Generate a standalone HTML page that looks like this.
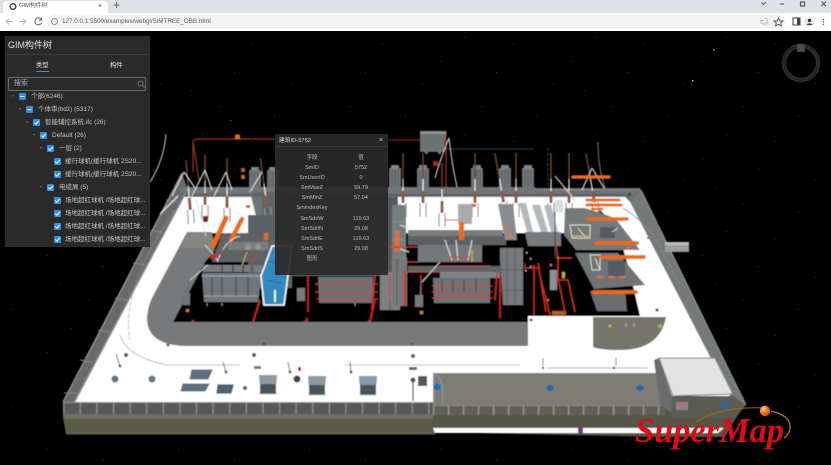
<!DOCTYPE html>
<html lang="zh"><head><meta charset="utf-8"><title>GIM构件树</title>
<style>
html,body{margin:0;padding:0;background:#000;width:831px;height:465px;overflow:hidden;font-family:"Liberation Sans","Noto Sans CJK SC",sans-serif}
#scene{position:absolute;left:0;top:31px}
.abs{position:absolute;white-space:nowrap}
#tabs{position:absolute;left:0;top:0;width:831px;height:13px;background:#dee1e6}
#tab{position:absolute;left:3px;top:1px;width:105px;height:12px;background:#fff;border-radius:4px 4px 0 0}
#bar{position:absolute;left:0;top:13px;width:831px;height:18px;background:#fff}
#url{position:absolute;left:47px;top:15px;width:738px;height:14px;background:#f1f3f4;border-radius:7px}
#panel{position:absolute;left:5px;top:36px;width:145px;height:211px;background:rgba(43,43,43,.97)}
#panel .abs{filter:blur(.3px)}
.row{position:absolute;height:13px;font-size:6.5px;line-height:13px;color:#c4c4c4;white-space:nowrap;filter:blur(.3px)}
.cb{position:absolute;width:7px;height:7px;background:#2f8fe6;border-radius:1px;top:3px}
.cb svg{position:absolute;left:0;top:0}
.ar{position:absolute;top:5px;width:0;height:0;border-left:1.5px solid transparent;border-right:1.500px solid transparent;border-top:2.500px solid #777}
#pop{position:absolute;left:275px;top:134px;width:113px;height:141px;background:rgba(42,42,42,.93)}
#pop div{position:absolute;font-size:5.500px;line-height:8px;color:#bdbdbd;white-space:nowrap;transform:translateX(-50%);filter:blur(.35px)}
</style></head><body>

<svg id="scene" width="831" height="434" viewBox="0 31 831 434" xmlns="http://www.w3.org/2000/svg">
<defs>
<pattern id="stars" width="131" height="97" patternUnits="userSpaceOnUse">
<rect x="12" y="18" width="1" height="1" fill="#333"/><rect x="47" y="61" width="1" height="1" fill="#2a2a2a"/><rect x="88" y="9" width="1" height="1" fill="#2e2e2e"/><rect x="103" y="72" width="1" height="1" fill="#3a3a3a"/><rect x="29" y="83" width="1" height="1" fill="#262626"/><rect x="71" y="37" width="1" height="1" fill="#2a2a2a"/><rect x="120" y="44" width="1" height="1" fill="#2b2b2b"/><rect x="60" y="90" width="1" height="1" fill="#262626"/>
</pattern>
<pattern id="fence" width="16.6" height="12" patternUnits="userSpaceOnUse" patternTransform="translate(63 402)">
<rect width="16.6" height="12" fill="#58595a"/><rect width="1.4" height="12" fill="#8a8a8a"/><rect width="16.6" height="1" fill="#8c8c8c"/>
</pattern>
<pattern id="fence2" width="15" height="10" patternUnits="userSpaceOnUse" patternTransform="translate(433 405)">
<rect width="15" height="10" fill="#616158"/><rect width="1.2" height="10" fill="#9c9c94"/><rect width="15" height="1" fill="#8d8d86"/>
</pattern>
<filter id="soft" x="-2%" y="-2%" width="104%" height="104%"><feGaussianBlur stdDeviation=".55"/></filter>
<g id="tower"><rect x="-6" y="0" width="12" height="24" fill="#6f7679"/><rect x="-4" y="-3" width="8" height="4" fill="#7d8588"/><path d="M-3 2V24M0 2V24M3 2V24" stroke="#4d5356" stroke-width=".7"/></g>
<g id="bush"><path d="M0 -12V14" stroke="#6e4732" stroke-width="1.500"/><path d="M0 14V32" stroke="#e8e8e8" stroke-width="1.200"/><path d="M-1.500 26h3v12h-3z" fill="#8a5a40"/><path d="M-3 38V52M3 38V52" stroke="#8f9598" stroke-width="1.200"/></g>
<g id="house"><path d="M0 0H18L17.500 9H.5Z" fill="#8b9aa3"/><path d="M1 9H17V19H1Z" fill="#45545c"/><path d="M0 19H18" stroke="#bbb" stroke-width=".6"/></g>
</defs>
<rect x="0" y="31" width="831" height="434" fill="#000"/>
<rect x="0" y="31" width="831" height="434" fill="url(#stars)"/>
<rect x="692" y="80" width="1.500" height="1.500" fill="#aaa"/><rect x="230" y="120" width="1" height="1" fill="#666"/><rect x="713" y="49" width="1.500" height="1.500" fill="#999"/>

<g filter="url(#soft)">
<!-- back wires -->
<path d="M193 172 L193 142 Q193 139 197 139 H275" fill="none" stroke="#a5301c" stroke-width="1.200"/>
<path d="M193 142 L199 180" stroke="#b3301f" stroke-width="1.200"/>
<rect x="235" y="134.500" width="5" height="5" fill="#d4701f"/>
<path d="M388 140H420M446 140H432" stroke="#8e1a14" stroke-width="1.200"/>
<path d="M446 131V205" stroke="#c8261c" stroke-width="1.200"/>
<path d="M446 149H534" stroke="#24344e" stroke-width="1.200"/>
<path d="M420 131H446L444 152H441V154H438V152H428V154H425V152H420Z" fill="#6d7274"/>
<path d="M420 131H446V134H420Z" fill="#8b9092"/>
<path d="M449 138Q440 160 435 178M449 138Q452 165 457 187" fill="none" stroke="#ddd" stroke-width="1"/>
<path d="M166 134Q164 160 150 182" fill="none" stroke="#cfcfcf" stroke-width="1"/>
<rect x="433" y="161" width="5" height="5" fill="#b0231c"/>
<rect x="241" y="168" width="4" height="4" fill="#c75a1e"/><rect x="241" y="175" width="4" height="4" fill="#d0641c"/>
<path d="M598 142Q598 170 606 190" fill="none" stroke="#777" stroke-width="1"/>
<path d="M548 148V190" stroke="#26405e" stroke-width="1" stroke-dasharray="3 2"/>

<!-- ground -->
<path d="M75 402L184 197H636L735 406H75Z" fill="#fff"/>
<!-- black pit -->
<path d="M205 233H565L600 210L617 227L630 273L640 316H528V322H173Z" fill="#000"/>
<!-- road -->
<path d="M187 232H212L215 250L205 262L173 322H528V346H188Q147 346 147 318Q148 305 153 296Z" fill="#77797a"/>
<path d="M187 233H212L214 248H180Z" fill="#858680"/>
<path d="M528 322H593V347H528Z" fill="#fff"/>
<path d="M593 317H666Q660 350 620 350Q600 350 593 347Z" fill="#76746c"/>
<circle cx="531" cy="320" r="1.500" fill="#555"/>
<circle cx="610" cy="326" r="1.500" fill="#c9b848"/><circle cx="626" cy="325" r="1.500" fill="#999"/><circle cx="634" cy="325" r="1.500" fill="#999"/><circle cx="660" cy="326" r="2" fill="#b8a84a"/><circle cx="657" cy="310" r="1.500" fill="#d5c24a"/>

<!-- dark zone behind popup and centre -->
<rect x="262" y="197" width="136" height="40" fill="#55595b"/>
<rect x="272" y="236" width="120" height="40" fill="#55595b"/>

<!-- back fence/bar -->
<path d="M183 188H640L646 202L630 202L625 197H183Z" fill="#6b7073"/>
<path d="M183 195H630" stroke="#4f5356" stroke-width="1"/>
<path d="M415 190H640" stroke="#868a8c" stroke-width="1"/>
<!-- left fence -->
<path d="M182 173 L188 190 L75 402 H63Z" fill="#67696a"/>
<path d="M63 402 L182 173" stroke="#9a9a9a" stroke-width="1.200"/>
<path d="M74 402L187 190" stroke="#8a8a8a" stroke-width="1.200"/>
<path d="M64 393L78 393M80 360L92 362M98 330L110 332M115 298L127 300M133 263L145 265M151 230L162 232M166 200L178 202" stroke="#8a8a8a" stroke-width="1"/>
<path d="M160 214L178 196" stroke="#ddd" stroke-width="1.500"/>
<!-- right fence -->
<path d="M641 190L746 405L735 405L630 202Z" fill="#75797a"/>
<path d="M641 190L746 405" stroke="#999" stroke-width="1"/>
<path d="M623 208Q650 225 662 250Q672 270 680 285" fill="none" stroke="#888" stroke-width=".8"/>
<rect x="665" y="242" width="24" height="10" fill="#9b9d9d"/><rect x="665" y="242" width="24" height="3" fill="#bbb"/>
<rect x="647" y="237" width="2" height="2" fill="#b4401c"/><rect x="628" y="193" width="3" height="3" fill="#444"/><circle cx="657" cy="310" r="1.500" fill="#444"/>
<circle cx="657" cy="224" r="1" fill="#a33"/>

<!-- left white-area details -->
<path d="M175 210Q120 290 130 340" fill="none" stroke="#999" stroke-width=".6" stroke-dasharray="5 1"/>
<path d="M120 335Q128 358 168 365H240M345 365H520" fill="none" stroke="#aaa" stroke-width=".7"/>
<g fill="#555">
<circle cx="126" cy="355" r="2"/><circle cx="254" cy="355" r="2"/><circle cx="413" cy="356" r="2"/><circle cx="168" cy="345" r="1.500"/><circle cx="264" cy="344" r="2"/><circle cx="412" cy="344" r="1.500"/>
</g>
<g stroke="#333" stroke-width=".8" fill="#555">
<path d="M116 354L120 366" /><circle cx="120" cy="366" r="1"/>
<path d="M223 362L226 372" /><circle cx="226" cy="372" r="1"/>
<path d="M288 362L290 372" /><circle cx="290" cy="372" r="1"/>
<path d="M350 362L351 372" /><circle cx="351" cy="372" r="1"/>
<path d="M413 380V401" stroke-width="1.200"/><circle cx="413" cy="380" r="2"/>
</g>
<rect x="254" y="366" width="7" height="3" fill="#777"/><rect x="409" y="367" width="8" height="3" fill="#666"/>
<circle cx="115" cy="379" r="3.500" fill="#5d7388"/><circle cx="152" cy="379" r="3.500" fill="#5d7388"/>
<circle cx="245" cy="388" r="2" fill="#555"/><circle cx="297" cy="379" r="3.500" fill="#444"/>
<rect x="298" y="367" width="3" height="4" fill="#c41e1e"/>
<path d="M192 370H212L208 379H190Z" fill="#5a6f82" stroke="#666"/>
<path d="M183 384H209L205 391H181Z" fill="#5a6f82" stroke="#666"/>
<path d="M218 385H233L231 393H217Z" fill="#4d6377" stroke="#555" stroke-width="1.200"/>
<use href="#house" x="259" y="375"/><use href="#house" x="308" y="376"/><use href="#house" x="359" y="376"/>
<rect x="418" y="376" width="9" height="10" fill="#555"/>
<!-- front wall left -->
<rect x="63" y="402" width="372" height="12" fill="url(#fence)"/>
<rect x="63" y="414" width="372" height="4" fill="#6e6e62"/>
<path d="M63 418H435V434H66Z" fill="#5a5a49"/>
<path d="M66 418H435M66 434H435" stroke="#80806e" stroke-width=".7"/>
<!-- right raised block -->
<path d="M433 373H658L672 405H433Z" fill="#7d7c75"/>
<path d="M433 373H435V405H433Z" fill="#888"/>
<circle cx="437" cy="387" r="3.500" fill="#1e6fb5"/><path d="M433 372Q446 380 442 402" fill="none" stroke="#8ab8dc" stroke-width=".6"/>
<ellipse cx="550" cy="388" rx="3.800" ry="3" fill="#1f6aa8"/><ellipse cx="640" cy="388" rx="3.800" ry="3" fill="#1f6aa8"/>
<path d="M433 405H672L745 405L736 418L725 437H660L433 432Z" fill="#55544a"/>
<rect x="433" y="405" width="232" height="10" fill="url(#fence2)"/>
<path d="M433 428H724L718 433H640V433H435Z" fill="#fff"/>
<rect x="578" y="427" width="5" height="6" fill="#7c2a8c"/>
<!-- right building -->
<path d="M654 360L659 358L672 396L672 413L660 405Z" fill="#6b6c6d"/>
<path d="M672 396H733L746 405L735 418H672Z" fill="#5b5b55"/>
<path d="M659 358H715L733 394L673 396Z" fill="#e3e3e3" stroke="#777" stroke-width="1"/>
<rect x="676" y="402" width="12" height="8" fill="#7b8a95"/><rect x="677" y="403" width="10" height="3" fill="#c86060"/>
<rect x="721" y="402" width="8" height="6" fill="#2a6a9a"/>
<path d="M547 368H648" stroke="#999" stroke-width=".8"/><circle cx="543" cy="368" r="1.200" fill="#444"/><circle cx="614" cy="368" r="1.200" fill="#444"/>
<path d="M543 358V366M616 358V366" stroke="#777" stroke-width="1"/>

<!-- interior back towers -->
<g>
<use href="#tower" x="255" y="170"/><use href="#tower" x="273" y="170"/>
<use href="#tower" x="395" y="168"/><use href="#tower" x="423" y="168"/><use href="#tower" x="477" y="168"/><use href="#tower" x="505" y="168"/><use href="#tower" x="528" y="168"/>
</g>
<rect x="180" y="187" width="250" height="6" fill="#71777a"/>
<rect x="395" y="187" width="140" height="7" fill="#6f7578"/>
<path d="M250 192H285V240H262Z" fill="#5f6669" opacity=".9"/>
<g>
<use href="#bush" x="187" y="172" transform="rotate(-5 187 172)"/>
<use href="#bush" x="205" y="167"/><use href="#bush" x="227" y="170"/><use href="#bush" x="262" y="170" transform="rotate(-8 262 170)"/>
<use href="#bush" x="403" y="165"/><use href="#bush" x="423" y="165"/><use href="#bush" x="442" y="175"/>
<use href="#bush" x="475" y="165"/><use href="#bush" x="497" y="165" transform="rotate(-10 497 165)"/><use href="#bush" x="516" y="165"/><use href="#bush" x="551" y="165"/><use href="#bush" x="569" y="165"/><use href="#bush" x="588" y="165" transform="rotate(-10 588 165)"/>
</g>
<path d="M184 172L172 196M184 172L195 188M205 170L192 196M205 170L212 190M226 172L214 196M226 172L232 190M555 176L575 200M592 168L604 188M592 168L582 190M262 172L250 192" stroke="#d5d5d5" stroke-width="1.200" fill="none"/>
<path d="M196 200L206 236" stroke="#ddd" stroke-width=".8"/>
<rect x="246" y="205" width="4" height="3" fill="#d85a1a"/>
<rect x="203" y="216" width="5" height="6" fill="#7a1a16"/>
<rect x="466" y="204" width="4" height="3" fill="#e0641a"/><rect x="472" y="204" width="4" height="3" fill="#e0641a"/>

<!-- left switch yard -->
<path d="M248 215H292V288H248Z" fill="#5a6064"/>
<path d="M222 233H276L272 262H212Z" fill="#5e6366"/>
<path d="M213 246L226 218" stroke="#ec6a1c" stroke-width="5" stroke-linecap="round"/>
<path d="M231 240L242 219" stroke="#ec6a1c" stroke-width="4.500" stroke-linecap="round"/>
<path d="M205 245Q215 255 218 262M240 236Q225 240 218 260" fill="none" stroke="#eee" stroke-width=".8"/>
<rect x="210" y="254" width="6" height="5" fill="#c9331c"/>
<path d="M213 258Q224 254 222 247" fill="none" stroke="#c72c1c" stroke-width="1"/>
<rect x="264" y="233" width="4" height="7" fill="#e36c1c"/>
<rect x="228" y="242" width="40" height="8" fill="#787d80"/>
<path d="M247 252L241 268" stroke="#c9a830" stroke-width="1.200"/><path d="M256 252L250 268" stroke="#b5402a" stroke-width="1.200"/>
<circle cx="248" cy="247" r="3" fill="#8f9a8e"/><circle cx="258" cy="247" r="3" fill="#8f9a8e"/>
<path d="M203 265H262V272H203Z" fill="#777c7f"/>
<g stroke="#5b4a40" stroke-width="1.500"><path d="M222 265V272M233 265V272M243 265V272M252 265V272"/></g>
<!-- transformer 1 -->
<path d="M202 273H262L258 302H204Z" fill="#70767a"/>
<path d="M202 276H262M204 296H258" stroke="#9aa0a4" stroke-width="1.200"/>
<path d="M212 277V296M222 277V296M236 277V296M248 277V296" stroke="#4f5559" stroke-width="1.500"/>
<path d="M207 303V306M222 303V306" stroke="#888" stroke-width="1"/>
<path d="M190 280L208 265" stroke="#ccc" stroke-width="1"/>
<path d="M190 284L184 295" stroke="#3a6fa8" stroke-width="1.200"/>
<rect x="183" y="293" width="7" height="12" fill="#70767a"/>
<rect x="186" y="309" width="3" height="3" fill="#e0701c"/>
<rect x="192" y="320" width="2" height="2" fill="#d2261c"/>
<!-- blue pool -->
<path d="M272 246H292L284 305H264L261 276Z" fill="#3488bd" stroke="#fff" stroke-width="1.500"/>
<path d="M268 262H286M267 280L283 283" stroke="#1d6a9e" stroke-width=".8"/>
<path d="M275 290V302" stroke="#e8f4fb" stroke-width="2"/>
<!-- red verticals -->
<path d="M253 322L260 300" stroke="#e0301c" stroke-width="1.500"/>
<path d="M307 322V318M370 322L375 300" stroke="#dd2a1c" stroke-width="1.500"/>
<circle cx="305" cy="321" r="1" fill="#d2261c"/><circle cx="369" cy="321" r="1" fill="#d2261c"/>
<!-- transformer 2 -->
<path d="M318 277H373V303H319Z" fill="#6c7174"/>
<path d="M315 284H378M315 292H378M317 299H378" stroke="#d33020" stroke-width="1"/>
<path d="M308 275V312M375 275L372 310" stroke="#cf2a1c" stroke-width="1.500"/>
<rect x="297" y="288" width="8" height="13" fill="#767b7e"/>
<rect x="380" y="272" width="20" height="38" fill="#7b8083"/>
<path d="M390 276V310" stroke="#52575a" stroke-width="1"/>
<path d="M355 303V306" stroke="#888"/>
<!-- central equipment -->
<rect x="392" y="205" width="14" height="100" fill="#777b7e"/>
<path d="M392 222H406M392 240H406M392 258H406" stroke="#999" stroke-width=".8"/>
<rect x="395" y="231" width="4" height="21" fill="#ee6a1a"/>
<path d="M400 225L408 228M400 249L409 252" stroke="#ddd" stroke-width="1"/>
<path d="M390 247H418M390 262H418M390 275V302" stroke="#d4301e" stroke-width="1"/>
<rect x="408" y="230" width="95" height="6" fill="#787c7f"/>
<rect x="418" y="245" width="64" height="17" fill="#73787b"/>
<rect x="408" y="236" width="98" height="9" fill="#5d6164"/>
<rect x="458" y="204" width="14" height="20" fill="#a8abad"/>
<rect x="459" y="222" width="5" height="18" fill="#ec6a1a"/>
<path d="M444 220H458" stroke="#d4301e" stroke-width="1"/>
<path d="M445 240L452 260M456 240L458 260M472 240L468 260" stroke="#e8e8e8" stroke-width="1"/>
<path d="M450 257H470M440 266H490M405 272H490" stroke="#d4301e" stroke-width="1"/>
<path d="M472 250V262" stroke="#d4b41e" stroke-width="1"/>
<rect x="408" y="266" width="95" height="6" fill="#777b7e" opacity=".8"/>
<rect x="440" y="272" width="60" height="6" fill="#7f8487"/>
<path d="M433 278H490V303H434Z" fill="#6d7275"/>
<path d="M432 286H492M432 292H492M432 298H492" stroke="#d33020" stroke-width="1"/>
<path d="M442 279V292M453 279V292M464 279V292M476 279V292" stroke="#52575a" stroke-width="1.500"/>
<path d="M421 275V303M497 272L495 300M500 275V318" stroke="#cd2b1c" stroke-width="1.500"/>
<path d="M422 282L440 262" stroke="#ccc" stroke-width="1"/>
<path d="M421 281L420 298" stroke="#446c9c" stroke-width="1"/>
<rect x="415" y="295" width="8" height="12" fill="#777"/>
<rect x="420" y="311" width="3" height="3" fill="#c68a3a"/>
<path d="M500 248H523V305H503L500 260Z" fill="#74797c"/>
<path d="M507 248V305M515 248V305M500 270H523M500 290H523" stroke="#595e61" stroke-width="1"/>
<rect x="393" y="258" width="14" height="48" fill="#74797c"/>
<path d="M397 258V305" stroke="#52575a"/>
<rect x="404" y="270" width="2" height="36" fill="#cf2c1c"/>
<!-- back-right columns -->
<g fill="#b5b8ba"><path d="M519 203H526L533 232H527Z"/><path d="M532 205H540L548 232H541Z"/><path d="M544 205H551L558 232H551Z"/></g>
<path d="M525 232H561V246H528Z" fill="#777c7f"/>
<path d="M498 204H513L517 240H505Z" fill="#888c8e"/>
<path d="M505 225L512 240" stroke="#ee6a1a" stroke-width="1.500"/>
<path d="M555 200H563V212L555 212Z" fill="#ddd"/>
<!-- right yard -->
<path d="M565 208H585L615 218L640 250L576 250L564 235Z" fill="#75797a"/>
<path d="M575 253H618L645 285L594 289Z" fill="#6f7375"/>
<path d="M590 291H625L627 311H597Z" fill="#6a6e70"/>
<g stroke="#dddccc" stroke-width="1" fill="none"><path d="M570 225H590V238H572ZM578 228L586 238"/><path d="M590 255H600V270H592ZM595 258L600 270"/></g>
<path d="M572 236H597M594 272H620" stroke="#d6bd3a" stroke-width="1"/>
<path d="M590 236H612M592 272H625" stroke="#3e79b0" stroke-width="1"/>
<path d="M600 227H615V238H600ZM608 261H625V276H608Z" fill="#555b5e"/>
<path d="M612 232L618 228" stroke="#ddd"/>
<g stroke="#eb6b1a" stroke-linecap="round" fill="none">
<path d="M573 177H609" stroke-width="3.500"/><path d="M587 200H619" stroke-width="3"/><path d="M587 205H621" stroke-width="3"/><path d="M592 209H602" stroke-width="2.500"/>
<path d="M588 219H627" stroke-width="3.500"/><path d="M596 243H637" stroke-width="3.800"/><path d="M601 257H644" stroke-width="3.800"/><path d="M594 292H636" stroke-width="3.800"/>
<path d="M598 277H630" stroke-width="2" stroke-dasharray="5 6"/>
</g>
<rect x="627" y="247" width="3" height="3" fill="#ec6a1a"/>
<!-- red lower right -->
<g stroke="#d2301e" stroke-width="1.300" fill="none">
<path d="M534 265V315M538 263L546 312M541 280Q546 300 550 315"/>
<path d="M558 260V280H568L575 312"/><path d="M558 278L565 312"/>
<path d="M555 240L558 258H572"/>
</g>
<rect x="550" y="270" width="7" height="20" fill="#8d9194"/>
<circle cx="551" cy="265" r="1.300" fill="#ec6a1a"/><circle cx="558" cy="258" r="1.300" fill="#ec6a1a"/><circle cx="548" cy="300" r="1.300" fill="#ec6a1a"/><rect x="552" y="311" width="14" height="4" fill="#b35a1c"/>
<path d="M525 264V268H540" stroke="#d2301e" fill="none"/>
<g fill="#aaa"><rect x="526" y="252" width="1.500" height="1.500"/><rect x="530" y="258" width="1.500" height="1.500"/><rect x="525" y="270" width="1.500" height="1.500"/><rect x="530" y="266" width="1.500" height="1.500"/></g>
<path d="M555 212V258" stroke="#26405e" stroke-width="1"/>
<rect x="562" y="272" width="3" height="6" fill="#c9a832"/>
</g>

<!-- compass -->
<g fill="none" filter="url(#soft)">
<circle cx="801" cy="63" r="17" stroke="#1e1e1e" stroke-width="3"/>
<circle cx="801" cy="63" r="18.500" stroke="#4a4a4a" stroke-width=".8"/>
<circle cx="801" cy="63" r="15.500" stroke="#4a4a4a" stroke-width=".8"/>
</g>
<rect x="797" y="44" width="8" height="8" fill="#4d4d4d" filter="url(#soft)"/>

<!-- supermap logo -->
<path d="M696 422Q720 406 765 408" fill="none" stroke="#9a6a1c" stroke-width="1"/>
<path d="M771 411Q792 416 790 429Q788 436 784 438" fill="none" stroke="#b5761c" stroke-width="1.300"/>
<radialGradient id="ball" cx=".35" cy=".3" r=".8"><stop offset="0" stop-color="#ffd2a0"/><stop offset=".45" stop-color="#f27c1e"/><stop offset="1" stop-color="#c2400c"/></radialGradient>
<circle cx="765" cy="411" r="5.200" fill="url(#ball)"/>
<text x="635" y="442" font-family="Liberation Serif,serif" font-size="35" font-weight="700" font-style="italic" fill="#dc0d18" textLength="149" lengthAdjust="spacingAndGlyphs">SuperMap</text>
</svg>

<!-- browser chrome -->
<div id="tabs"><div id="tab"></div></div>
<div id="bar"></div><div id="url"></div>
<svg class="abs" style="left:9px;top:2px" width="9" height="9"><circle cx="4" cy="4.500" r="2.800" fill="none" stroke="#444" stroke-width="1.500"/></svg>
<div class="abs" style="left:19px;top:1px;font-size:5.800px;line-height:11px;color:#555;filter:blur(.3px)">GIM构件树</div>
<div class="abs" style="left:98px;top:1px;font-size:7px;line-height:11px;color:#555">×</div>
<div class="abs" style="left:113px;top:-1px;font-size:12px;line-height:13px;color:#555">+</div>
<svg class="abs" style="left:0;top:13px" width="60" height="18"><g fill="none" stroke-width="1"><path d="M13 8.500H6M9 5.500L6 8.500L9 11.500" stroke="#b5b8bb"/><path d="M19 8.500H26M23 5.500L26 8.500L23 11.500" stroke="#b5b8bb"/><path d="M41 6A3.500 3.500 0 1 0 41.500 10M41.500 4.500V7H39" stroke="#5c6064"/></g><circle cx="54.500" cy="8.500" r="3" fill="none" stroke="#777" stroke-width=".8"/></svg>
<div class="abs" style="left:62px;top:15px;font-size:6.300px;line-height:14px;color:#5a5e63;filter:blur(.3px)">127.0.0.1:5500/examples/webgl/SiMTREE_OBB.html</div>
<svg class="abs" style="left:760px;top:0" width="71" height="31">
<g fill="none" stroke="#555" stroke-width="1"><path d="M1.500 2.500L3.500 4.500L6 2.500" /><path d="M20 4H24" /><rect x="40.500" y="2" width="4" height="4" stroke-width="1.200"/><path d="M61.500 1.500L66 6M66 1.500L61.500 6" /></g>
<path d="M1 24V20.500H4M2 24H7V19L5 18" fill="none" stroke="#aaa" stroke-width=".8"/>
<path d="M18.500 18L20 21H23L20.700 23L21.500 26L18.500 24.300L15.500 26L16.300 23L14 21H17Z" fill="none" stroke="#555" stroke-width=".9"/>
<rect x="33" y="18" width="7" height="7" fill="none" stroke="#444" stroke-width="1"/><rect x="37" y="18" width="3" height="7" fill="#444"/>
<circle cx="49.500" cy="22" r="5" fill="#dfe3e8"/><circle cx="49.500" cy="20.500" r="1.600" fill="#333"/><path d="M46.500 25Q49.500 21.500 52.500 25Z" fill="#333"/>
<g fill="#555"><circle cx="63.500" cy="19.500" r=".7"/><circle cx="63.500" cy="22" r=".7"/><circle cx="63.500" cy="24.500" r=".7"/></g>
</svg>

<!-- tree panel -->
<div id="panel">
<div class="abs" style="left:3px;top:3px;font-size:9px;line-height:12px;color:#e2e2e2">GIM构件树</div>
<div class="abs" style="left:0;top:18px;width:145px;height:1px;background:#3c3c3c"></div>
<div class="abs" style="left:31px;top:25px;font-size:6.300px;line-height:9px;color:#e4e4e4">类型</div>
<div class="abs" style="left:31px;top:35px;width:13px;height:1px;background:#2f8fe6"></div>
<div class="abs" style="left:105px;top:25px;font-size:6.300px;line-height:9px;color:#e4e4e4">构件</div>
<div class="abs" style="left:3px;top:41px;width:136px;height:12px;border:1px solid #6a6a6a;border-radius:2px;box-sizing:content-box"></div>
<div class="abs" style="left:9px;top:41px;font-size:7px;line-height:14px;color:#aaa">搜索</div>
<svg class="abs" style="left:131px;top:42px" width="10" height="12"><circle cx="4.500" cy="5.500" r="2.500" fill="none" stroke="#777"/><path d="M6.500 7.500L8.500 9.500" stroke="#777"/></svg>

<div class="row" style="left:7px;top:54px"><span class="ar" style="left:0"></span><span class="cb" style="left:7px"><svg width="7" height="7"><path d="M1.500 3.500H5.500" stroke="#fff"/></svg></span><span style="margin-left:19px">个部(6246)</span></div>
<div class="row" style="left:14px;top:67px"><span class="ar" style="left:0"></span><span class="cb" style="left:7px"><svg width="7" height="7"><path d="M1.500 3.500H5.500" stroke="#fff"/></svg></span><span style="margin-left:19px">个体审(bdz) (5317)</span></div>
<div class="row" style="left:21px;top:80px"><span class="ar" style="left:0"></span><span class="cb" style="left:7px"><svg width="7" height="7"><path d="M1.300 3.500L3 5.200L5.700 2" stroke="#fff" fill="none"/></svg></span><span style="margin-left:19px">智能辅控系统.ifc (26)</span></div>
<div class="row" style="left:28px;top:93px"><span class="ar" style="left:0"></span><span class="cb" style="left:7px"><svg width="7" height="7"><path d="M1.300 3.500L3 5.200L5.700 2" stroke="#fff" fill="none"/></svg></span><span style="margin-left:19px">Default (26)</span></div>
<div class="row" style="left:35px;top:106px"><span class="ar" style="left:0"></span><span class="cb" style="left:7px"><svg width="7" height="7"><path d="M1.300 3.500L3 5.200L5.700 2" stroke="#fff" fill="none"/></svg></span><span style="margin-left:19px">一层 (2)</span></div>
<div class="row" style="left:49px;top:119px"><span class="cb" style="left:0"><svg width="7" height="7"><path d="M1.300 3.500L3 5.200L5.700 2" stroke="#fff" fill="none"/></svg></span><span style="margin-left:11px">缓行球机(缓行球机 2S20...</span></div>
<div class="row" style="left:49px;top:132px"><span class="cb" style="left:0"><svg width="7" height="7"><path d="M1.300 3.500L3 5.200L5.700 2" stroke="#fff" fill="none"/></svg></span><span style="margin-left:11px">缓行球机(缓行球机 2S20...</span></div>
<div class="row" style="left:35px;top:145px"><span class="ar" style="left:0"></span><span class="cb" style="left:7px"><svg width="7" height="7"><path d="M1.300 3.500L3 5.200L5.700 2" stroke="#fff" fill="none"/></svg></span><span style="margin-left:19px">电缆屑 (5)</span></div>
<div class="row" style="left:49px;top:158px"><span class="cb" style="left:0"><svg width="7" height="7"><path d="M1.300 3.500L3 5.200L5.700 2" stroke="#fff" fill="none"/></svg></span><span style="margin-left:11px">场地超红球机 /场地超红球...</span></div>
<div class="row" style="left:49px;top:171px"><span class="cb" style="left:0"><svg width="7" height="7"><path d="M1.300 3.500L3 5.200L5.700 2" stroke="#fff" fill="none"/></svg></span><span style="margin-left:11px">场地超红球机 /场地超红球...</span></div>
<div class="row" style="left:49px;top:184px"><span class="cb" style="left:0"><svg width="7" height="7"><path d="M1.300 3.500L3 5.200L5.700 2" stroke="#fff" fill="none"/></svg></span><span style="margin-left:11px">场地超红球机 /场地超红球...</span></div>
<div class="row" style="left:49px;top:197px"><span class="cb" style="left:0"><svg width="7" height="7"><path d="M1.300 3.500L3 5.200L5.700 2" stroke="#fff" fill="none"/></svg></span><span style="margin-left:11px">场地超红球机 /场地超红球...</span></div>
</div>

<!-- popup -->
<div id="pop">
<div style="left:20px;top:3px;font-size:5.800px;color:#ddd">建筑ID-5752</div>
<div style="left:106px;top:3px;font-size:7px;color:#ccc">×</div>
<div style="left:0;top:12px;width:113px;height:1px;background:#3a3a3a;transform:none"></div>
<div style="left:37px;top:20px">字段</div><div style="left:86px;top:20px">值</div>
<div style="left:37px;top:30px">SmID</div><div style="left:86px;top:30px">5752</div>
<div style="left:37px;top:40px">SmUserID</div><div style="left:86px;top:40px">0</div>
<div style="left:37px;top:50px">SmMaxZ</div><div style="left:86px;top:50px">59.79</div>
<div style="left:37px;top:60px">SmMinZ</div><div style="left:86px;top:60px">57.04</div>
<div style="left:37px;top:70px">SmIndexKey</div>
<div style="left:37px;top:81px">SmSdriW</div><div style="left:86px;top:81px">119.63</div>
<div style="left:37px;top:91px">SmSdriN</div><div style="left:86px;top:91px">29.08</div>
<div style="left:37px;top:101px">SmSdriE</div><div style="left:86px;top:101px">119.63</div>
<div style="left:37px;top:111px">SmSdriS</div><div style="left:86px;top:111px">29.08</div>
<div style="left:37px;top:121px">图形</div>
</div>
</body></html>
